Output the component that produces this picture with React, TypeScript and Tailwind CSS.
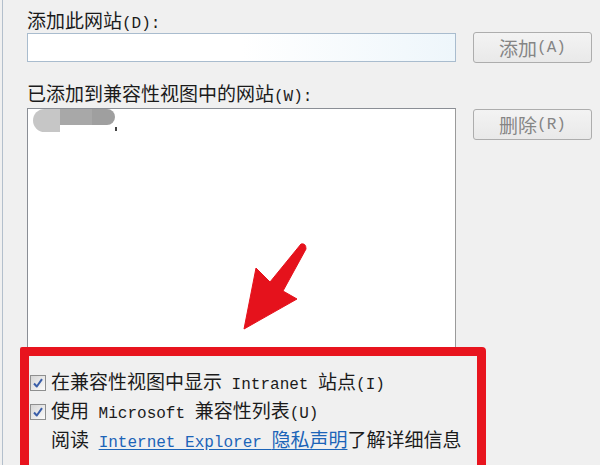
import React from 'react'

const cjk = "font-['Noto_Sans_CJK_SC','Noto_Sans',sans-serif]"
const mono = "font-['Liberation_Mono',monospace] text-[16px]"

const M = ({ children }: { children: React.ReactNode }) => <span className={mono}>{children}</span>

const CheckBox = () => (
    <div className="w-[16px] h-[16px] border border-[#8e8f8f] bg-gradient-to-br from-[#d6d6d6] to-[#fbfbfb] flex items-center justify-center">
        <svg width="12" height="12" viewBox="0 0 12 12">
            <path d="M2 6.5 L4.8 9.5 L10 2.2" fill="none" stroke="#3a5ea8" strokeWidth="2" strokeLinejoin="round" />
        </svg>
    </div>
)

const Button = ({ label, hint }: { label: string; hint: string }) => (
    <div className="h-[31px] rounded-[3px] border border-[#adadad] bg-gradient-to-b from-[#f3f3f3] to-[#e9e9e9] flex items-center justify-center text-[#858585] text-[19px] leading-none">
        <span>{label}</span>
        <M>({hint})</M>
    </div>
)

export default function App() {
    return (
        <div className={`relative w-[600px] h-[465px] overflow-hidden bg-[#f0f0f0] ${cjk} text-[19px] text-[#1b1b1b]`}>
            <div className="h-full ml-[2px] border-l border-[#b3bfcc] flex gap-x-[17px] pl-[24px]">
                {/* left column */}
                <div className="w-[429px] flex flex-col">
                    <div className="mt-[8px] h-[24px] leading-[24px]">
                        添加此网站<M>(D):</M>
                    </div>
                    <div className="mt-[1px] h-[29px] border border-[#a9bcce] bg-gradient-to-r from-white via-white to-[#eef6fb]" />
                    <div className="mt-[19px] h-[24px] leading-[24px]">
                        已添加到兼容性视图中的网站<M>(W):</M>
                    </div>
                    <div className="mt-[3px] h-[244px] border border-[#8a8e95] border-r-[#9a9a9a] bg-white pl-[5px]">
                        <div className="flex items-start blur-[0.6px]">
                            <div className="w-[27px] h-[23px] rounded-l-full rounded-br-[6px] bg-[#c6c6c6]" />
                            <div className="w-[32px] h-[16px] bg-[#a8a8a8]" />
                            <div className="w-[23px] h-[16px] rounded-r-full bg-[#9f9f9f]" />
                            <div className="mt-[18px] w-[2px] h-[4px] bg-[#444]" />
                        </div>
                    </div>
                    <div className="pt-[16px] pl-[3px] flex flex-col">
                        <div className="h-[29px] flex items-center gap-[5px]">
                            <CheckBox />
                            <span className="leading-[29px]">在兼容性视图中显示<M> Intranet </M>站点<M>(I)</M></span>
                        </div>
                        <div className="h-[29px] flex items-center gap-[5px]">
                            <CheckBox />
                            <span className="leading-[29px]">使用<M> Microsoft </M>兼容性列表<M>(U)</M></span>
                        </div>
                        <div className="h-[29px] flex items-center pl-[21px]">
                            <span className="leading-[29px] whitespace-nowrap">
                                阅读<M> </M>
                                <span className="text-[#1c64b8] underline underline-offset-[2px]">
                                    <M>Internet Explorer </M>隐私声明
                                </span>
                                了解详细信息
                            </span>
                        </div>
                    </div>
                </div>

                {/* right column */}
                <div className="w-[119px] flex flex-col pt-[32px]">
                    <Button label="添加" hint="A" />
                    <div className="mt-[46px]">
                        <Button label="删除" hint="R" />
                    </div>
                </div>
            </div>

            {/* annotation overlay */}
            <div className="absolute left-[20px] top-[347px] w-[466px] h-[140px] border-[9px] border-[#e8141e] rounded-tr-[4px] rounded-tl-[2px]" />
            <svg className="absolute left-0 top-0" width="600" height="465" viewBox="0 0 600 465">
                <path
                    d="M301 244 Q306 243 306 249 L283 291 L297 299 L244 329 L256 268 L270 282 Z"
                    fill="#e5121c"
                    stroke="#e5121c"
                    strokeWidth="1"
                    strokeLinejoin="round"
                />
            </svg>
        </div>
    )
}
